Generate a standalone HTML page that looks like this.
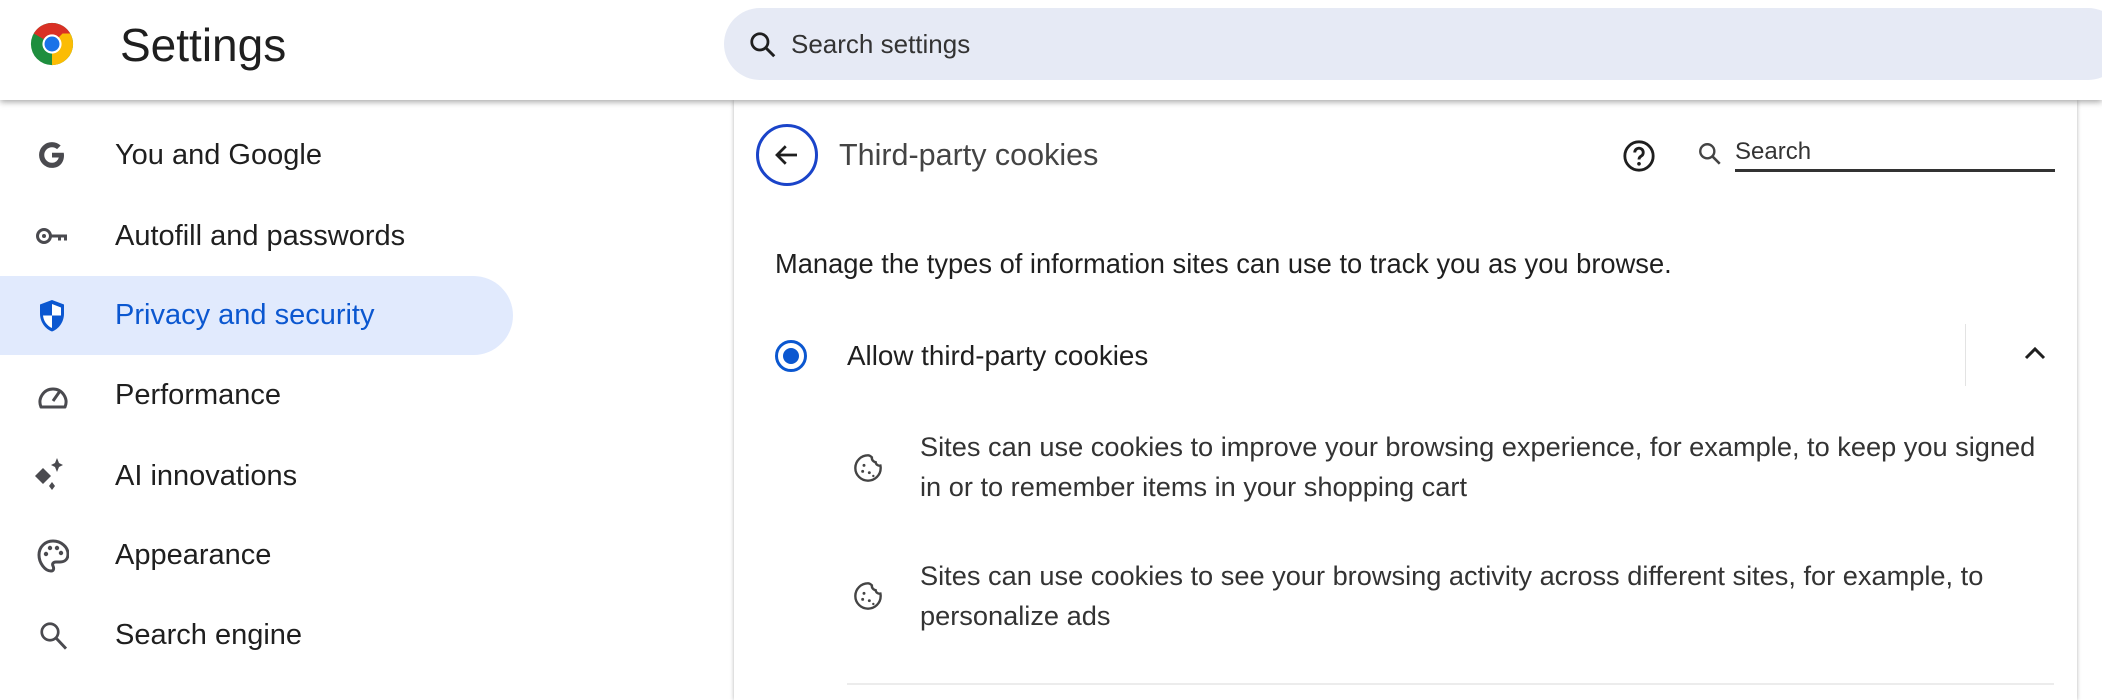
<!DOCTYPE html>
<html><head><meta charset="utf-8"><style>
*{margin:0;padding:0;box-sizing:border-box}
body{width:2102px;height:692px;overflow:hidden;background:#fff;font-family:"Liberation Sans",Arial,sans-serif;color:#1f1f1f;position:relative}
.a{position:absolute;white-space:nowrap}
.hdr{position:absolute;left:0;top:0;width:2102px;height:100px;background:#fff;box-shadow:0 2px 6px rgba(0,0,0,.35);z-index:2}
.nav{font-size:29px;line-height:32px;transform:translateY(-16px)}
.ic{position:absolute}
</style></head><body>
<div class="hdr">
<svg class="ic" style="left:29px;top:21px" width="46" height="46" viewBox="0 0 48 48">
<circle cx="24" cy="24" r="22" fill="#1e8e3e"/>
<path d="M24 24 L5 13 A22 22 0 0 1 43 13 Z" fill="#d93025"/>
<path d="M24 24 L43 13 A22 22 0 0 1 24 46 Z" fill="#fbbc04"/>
<path d="M24 24 L35 13 L43 13 L30 35 Z" fill="#fbbc04"/>
<circle cx="24" cy="24" r="10" fill="#fff"/><circle cx="24" cy="24" r="7.8" fill="#1a73e8"/>
</svg>
<div class="a" style="left:120px;top:19px;font-size:46px;line-height:52px;color:#1f1f1f">Settings</div>
<div class="a" style="left:724px;top:8px;width:1400px;height:72px;border-radius:36px;background:#e6eaf5"></div>
<svg class="ic" style="left:748px;top:30px" width="30" height="30" viewBox="0 0 24 24"><circle cx="9.5" cy="9.5" r="6.5" fill="none" stroke="#1f1f1f" stroke-width="2.2"/><path d="M14.5 14.5 21 21" stroke="#1f1f1f" stroke-width="2.4"/></svg>
<div class="a" style="left:791px;top:30px;font-size:26px;line-height:28px;color:#333">Search settings</div>
</div>

<!-- left nav -->
<div class="a" style="left:0;top:276px;width:513px;height:79px;border-radius:0 40px 40px 0;background:#e1eafd"></div>
<svg class="ic" style="left:36px;top:139px" width="32" height="32" viewBox="0 0 24 24"><path d="M21 12.2c0-.7-.1-1.3-.2-1.9H12v3.6h5.1a5 5 0 0 1-5.1 3.9 5.8 5.8 0 0 1 0-11.6c1.5 0 2.8.5 3.8 1.4l2.7-2.7A9.7 9.7 0 0 0 12 2.3a9.7 9.7 0 1 0 0 19.4c5.6 0 9-3.9 9-9.5z" fill="#4a4a4f"/></svg>
<div class="a nav" style="left:115px;top:155px">You and Google</div>
<svg class="ic" style="left:35px;top:224px" width="36" height="24" viewBox="0 0 36 24"><circle cx="9" cy="12" r="6.5" fill="none" stroke="#4a4a4f" stroke-width="3"/><circle cx="9" cy="12" r="2" fill="#4a4a4f"/><path d="M15 10.5h17v6h-3v-3h-3v3h-3v-3h-8z" fill="#4a4a4f"/></svg>
<div class="a nav" style="left:115px;top:236px">Autofill and passwords</div>
<svg class="ic" style="left:38px;top:299px" width="28" height="34" viewBox="0 0 28 34"><path d="M14 1 2 5.5v9c0 8.5 5.2 15.5 12 18 6.8-2.5 12-9.5 12-18v-9z" fill="#0b57d0"/><path d="M14 5 23 8.5v8H14z M14 16.5h-9v-1c0 6 4 11.5 9 13.5z" fill="#fff"/></svg>
<div class="a nav" style="left:115px;top:315px;color:#0b57d0">Privacy and security</div>
<svg class="ic" style="left:37px;top:383px" width="32" height="26" viewBox="0 0 32 26"><path d="M4 24A13 13 0 1 1 28 24Z" fill="none" stroke="#4a4a4f" stroke-width="3" stroke-linejoin="round"/><path d="M16 18 23 8" stroke="#4a4a4f" stroke-width="3"/></svg>
<div class="a nav" style="left:115px;top:395px">Performance</div>
<svg class="ic" style="left:32px;top:456px" width="36" height="36" viewBox="0 0 36 36"><path d="M11 12l8 8-8 8-8-8z" fill="#4a4a4f"/><path d="M25 2l2 5 4 2-4 2-2 5-2-5-4-2 4-2z" fill="#4a4a4f"/><path d="M20 26l3 4-3 4-3-4z" fill="#4a4a4f"/></svg>
<div class="a nav" style="left:115px;top:476px">AI innovations</div>
<svg class="ic" style="left:37px;top:539px" width="32" height="34" viewBox="0 0 32 34"><path d="M16 2C8 2 2 8 2 16c0 8 6 16 12 16 3 0 3-3 2-5s0-4 3-4h4c5 0 8-3 8-8C31 8 24 2 16 2z" fill="none" stroke="#4a4a4f" stroke-width="3"/><circle cx="9" cy="15" r="2.2" fill="#4a4a4f"/><circle cx="13" cy="9" r="2.2" fill="#4a4a4f"/><circle cx="20" cy="9" r="2.2" fill="#4a4a4f"/><circle cx="24" cy="14" r="2.2" fill="#4a4a4f"/></svg>
<div class="a nav" style="left:115px;top:555px">Appearance</div>
<svg class="ic" style="left:38px;top:620px" width="32" height="32" viewBox="0 0 24 24"><circle cx="9" cy="9" r="6.2" fill="none" stroke="#4a4a4f" stroke-width="2"/><path d="M13.5 13.5 21 21.5" stroke="#4a4a4f" stroke-width="2.2"/></svg>
<div class="a nav" style="left:115px;top:635px">Search engine</div>

<!-- card -->
<div class="a" style="left:734px;top:100px;width:1343px;height:600px;background:#fff;box-shadow:0 0 4px rgba(0,0,0,.3)"></div>
<div class="a" style="left:756px;top:124px;width:62px;height:62px;border-radius:50%;border:3px solid #1a44c9"></div>
<svg class="ic" style="left:772px;top:140px" width="30" height="30" viewBox="0 0 24 24"><path d="M20 12H5M11 5l-7 7 7 7" fill="none" stroke="#1f1f1f" stroke-width="2.2"/></svg>
<div class="a" style="left:839px;top:138px;font-size:30.5px;line-height:34px;color:#444">Third-party cookies</div>
<svg class="ic" style="left:1622px;top:139px" width="34" height="34" viewBox="0 0 24 24"><circle cx="12" cy="12" r="10" fill="none" stroke="#1f1f1f" stroke-width="2"/><path d="M9 9.5a3 3 0 1 1 4.5 2.6c-1 .6-1.5 1.2-1.5 2.4" fill="none" stroke="#1f1f1f" stroke-width="2"/><circle cx="12" cy="17.5" r="1.3" fill="#1f1f1f"/></svg>
<svg class="ic" style="left:1697px;top:141px" width="26" height="26" viewBox="0 0 24 24"><circle cx="9.5" cy="9.5" r="6.5" fill="none" stroke="#444" stroke-width="2.2"/><path d="M14.5 14.5 21 21" stroke="#444" stroke-width="2.4"/></svg>
<div class="a" style="left:1735px;top:138px;font-size:24px;line-height:28px;color:#333">Search</div>
<div class="a" style="left:1735px;top:169px;width:320px;height:3px;background:#333"></div>
<div class="a" style="left:775px;top:248px;font-size:27.3px;line-height:32px">Manage the types of information sites can use to track you as you browse.</div>
<div class="a" style="left:775px;top:340px;width:32px;height:32px;border-radius:50%;border:3px solid #0b57d0"></div>
<div class="a" style="left:783px;top:348px;width:16px;height:16px;border-radius:50%;background:#0b57d0"></div>
<div class="a" style="left:847px;top:340px;font-size:27.8px;line-height:32px">Allow third-party cookies</div>
<div class="a" style="left:1965px;top:324px;width:1px;height:62px;background:#e3e3e3"></div>
<svg class="ic" style="left:2022px;top:343px" width="26" height="20" viewBox="0 0 26 20"><path d="M4 15 13 6l9 9" fill="none" stroke="#1f1f1f" stroke-width="3"/></svg>
<svg class="ic" style="left:852px;top:452px" width="32" height="32" viewBox="0 0 24 24"><path d="M12 2.5a9.5 9.5 0 1 0 9.5 9.5c0-.7-.1-1.2-.2-1.8-1.8.3-3.3-.8-3.6-2.6-1.8-.2-3-1.8-2.8-3.6-.9-.9-1.5-1.5-2.9-1.5z" fill="none" stroke="#444" stroke-width="1.8"/><circle cx="9" cy="10" r="1.1" fill="#444"/><circle cx="8" cy="14.5" r="1.1" fill="#444"/><circle cx="13" cy="15.5" r="1.1" fill="#444"/><circle cx="16" cy="18" r="0.9" fill="#444"/></svg>
<svg class="ic" style="left:852px;top:580px" width="32" height="32" viewBox="0 0 24 24"><path d="M12 2.5a9.5 9.5 0 1 0 9.5 9.5c0-.7-.1-1.2-.2-1.8-1.8.3-3.3-.8-3.6-2.6-1.8-.2-3-1.8-2.8-3.6-.9-.9-1.5-1.5-2.9-1.5z" fill="none" stroke="#444" stroke-width="1.8"/><circle cx="9" cy="10" r="1.1" fill="#444"/><circle cx="8" cy="14.5" r="1.1" fill="#444"/><circle cx="13" cy="15.5" r="1.1" fill="#444"/><circle cx="16" cy="18" r="0.9" fill="#444"/></svg>
<div class="a" style="left:920px;top:427px;font-size:27.2px;line-height:40px;color:#333">Sites can use cookies to improve your browsing experience, for example, to keep you signed<br>in or to remember items in your shopping cart</div>
<div class="a" style="left:920px;top:556px;font-size:27.2px;line-height:40px;color:#333">Sites can use cookies to see your browsing activity across different sites, for example, to<br>personalize ads</div>
<div class="a" style="left:847px;top:683px;width:1207px;height:2px;background:#ececec"></div>
</body></html>
